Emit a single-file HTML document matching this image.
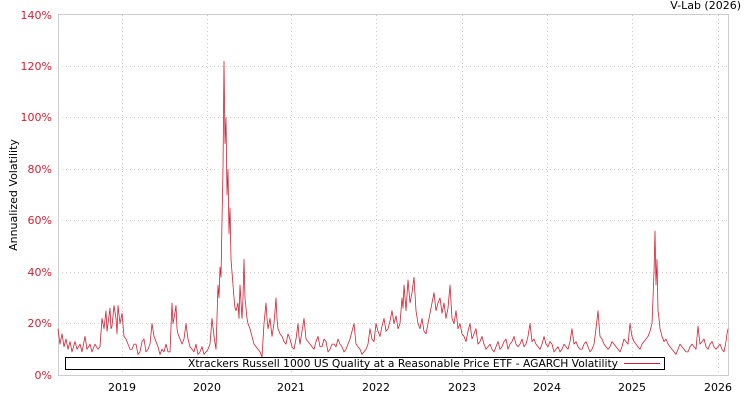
<!DOCTYPE html>
<html><head><style>body{margin:0;background:#fff}svg{display:block}</style></head><body>
<svg width="750" height="400" xmlns="http://www.w3.org/2000/svg" font-family="DejaVu Sans, Liberation Sans, sans-serif">
<rect width="750" height="400" fill="#fff"/>
<g stroke="#ccc" stroke-width="1" stroke-dasharray="1,3">
<line x1="58" x2="728" y1="323.5" y2="323.5"/><line x1="58" x2="728" y1="272.5" y2="272.5"/><line x1="58" x2="728" y1="220.5" y2="220.5"/><line x1="58" x2="728" y1="169.5" y2="169.5"/><line x1="58" x2="728" y1="117.5" y2="117.5"/><line x1="58" x2="728" y1="66.5" y2="66.5"/>
<line x1="122.5" x2="122.5" y1="15" y2="375"/><line x1="207.5" x2="207.5" y1="15" y2="375"/><line x1="291.5" x2="291.5" y1="15" y2="375"/><line x1="376.5" x2="376.5" y1="15" y2="375"/><line x1="462.5" x2="462.5" y1="15" y2="375"/><line x1="547.5" x2="547.5" y1="15" y2="375"/><line x1="632.5" x2="632.5" y1="15" y2="375"/><line x1="718.5" x2="718.5" y1="15" y2="375"/>
</g>
<rect x="58.5" y="14.5" width="670" height="361" fill="none" stroke="#ccc"/>
<g fill="#d62032" font-size="11" text-anchor="end">
<text x="52" y="19">140%</text><text x="52" y="70">120%</text><text x="52" y="121">100%</text><text x="52" y="173">80%</text><text x="52" y="224">60%</text><text x="52" y="276">40%</text><text x="52" y="327">20%</text><text x="52" y="379">0%</text>
</g>
<g fill="#000" font-size="11" text-anchor="middle">
<text x="122" y="391">2019</text><text x="207" y="391">2020</text><text x="291" y="391">2021</text><text x="376" y="391">2022</text><text x="462" y="391">2023</text><text x="547" y="391">2024</text><text x="632" y="391">2025</text><text x="718" y="391">2026</text>
</g>
<text x="741" y="9" font-size="11" text-anchor="end">V-Lab (2026)</text>
<text transform="translate(17,195) rotate(-90)" font-size="11" text-anchor="middle">Annualized Volatility</text>
<g transform="translate(0,375) scale(1,-2.5714)">
<polyline fill="none" stroke="#d62032" stroke-width="0.8" vector-effect="non-scaling-stroke" stroke-linejoin="round" points="58,18 60,12 62,16 64,11 66,14 68,10 70,13 72,9 75,13 77,10 80,12 82,9 85,15 87,10 90,12 92,9 95,12 98,10 100,11 102,22 104,18 106,25 107,17 108,20 110,26 111,18 112,19 114,27 116,22 117,16 118,27 120,20 122,24 124,15 126,14 128,12 130,10 132,10 134,12 136,12 138,8 140,9 142,13 144,14 146,9 148,10 150,12 152,20 154,15 156,13 158,11 160,8 162,10 164,9 166,12 168,9 170,9 172,28 173,20 174,22 176,27 177,18 178,16 180,14 182,12 184,14 186,20 188,14 190,11 192,10 194,9 196,12 198,8 200,9 202,11 204,8 206,9 208,10 210,12 212,22 214,15 216,10 218,35 219,30 220,42 221,38 222,60 223,80 224,122 225,90 226,100 227,70 228,80 229,55 230,65 231,45 232,40 233,35 234,30 235,26 236,25 238,28 239,22 240,35 242,22 243,30 244,45 245,30 246,26 247,22 248,20 250,18 252,15 254,12 256,11 258,10 260,9 262,7 264,20 266,28 267,22 268,18 270,22 272,15 274,20 276,30 277,22 278,18 280,16 282,15 284,13 286,12 288,16 290,14 292,11 294,10 296,14 298,20 299,15 300,12 302,17 304,22 306,14 308,13 310,12 312,11 314,10 316,13 318,15 320,11 322,11 324,14 326,13 328,9 330,10 332,12 334,12 336,11 338,14 340,12 342,11 344,9 346,10 348,12 350,14 352,17 354,20 356,12 358,11 360,10 362,8 364,9 366,10 368,12 370,18 372,14 374,13 376,20 378,17 380,15 382,19 384,22 386,17 388,18 390,21 392,25 394,20 396,23 398,18 400,20 402,30 403,26 404,35 406,25 408,37 410,28 412,32 414,38 416,25 418,20 420,18 422,22 424,17 426,16 428,20 430,24 432,28 434,32 436,25 438,28 440,30 442,24 444,28 446,22 448,26 450,35 452,22 454,20 456,25 458,18 460,20 462,16 464,15 466,13 468,17 470,20 472,14 474,16 476,18 478,12 480,13 482,15 484,12 486,10 488,11 490,12 492,10 494,9 496,11 498,13 500,10 502,11 504,13 506,14 508,10 510,12 512,13 514,15 516,12 518,11 520,12 522,14 524,11 526,12 528,15 530,20 532,13 534,14 536,12 538,11 540,10 542,12 544,15 546,12 548,11 550,13 552,12 554,9 556,10 558,11 560,9 562,10 564,12 566,11 568,10 570,13 572,18 574,12 576,13 578,11 580,10 582,10 584,12 586,13 588,11 590,9 592,10 594,12 596,18 598,25 600,15 602,14 604,12 606,11 608,10 610,11 612,13 614,12 616,11 618,10 620,9 622,11 624,14 626,13 628,12 630,20 632,15 634,13 636,12 638,11 640,10 642,12 644,13 646,14 648,15 650,17 652,20 653,30 654,40 655,56 656,35 657,45 658,25 659,22 660,18 662,15 664,13 666,14 668,12 670,11 672,10 674,9 676,8 678,10 680,12 682,11 684,10 686,9 688,9 690,11 692,12 694,11 696,10 698,19 700,12 702,13 704,14 706,11 708,10 710,12 712,13 714,11 716,10 718,11 720,12 722,10 724,9 726,13 727,16 728,18"/>
</g>
<rect x="65.5" y="357.5" width="599" height="12" fill="#fff" stroke="#000"/>
<text x="188" y="367" font-size="11" textLength="430" lengthAdjust="spacingAndGlyphs">Xtrackers Russell 1000 US Quality at a Reasonable Price ETF - AGARCH Volatility</text>
<line x1="624" x2="660" y1="363.5" y2="363.5" stroke="#d62032" stroke-width="1"/>
</svg>
</body></html>
